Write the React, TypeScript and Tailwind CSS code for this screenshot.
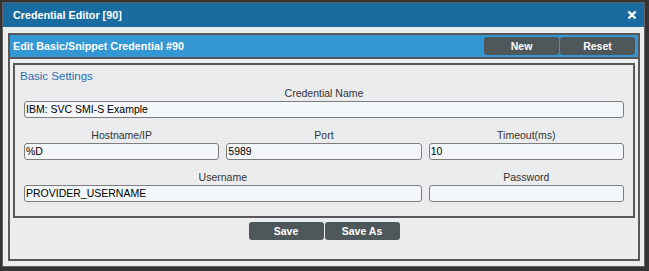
import React from 'react';

const font = { fontFamily: '"Liberation Sans", Arial, sans-serif' };

function Field({ label, value, className = '' }: { label: string; value: string; className?: string }) {
  return (
    <div className={`flex flex-col ${className}`}>
      <div className="text-center text-[10.5px] leading-[14px] text-[#333]">{label}</div>
      <div className="mt-[1px] h-[17px] rounded-[3px] border border-[#7d7d7d] bg-[#f4f7f9] px-[1px] text-[10.5px] leading-[15px] text-black">
        {value}
      </div>
    </div>
  );
}

function DarkButton({ children }: { children: React.ReactNode }) {
  return (
    <button className="h-[18px] w-[75px] rounded-[3px] bg-[#4e5759] text-[10.5px] font-bold leading-[18px] text-white">
      {children}
    </button>
  );
}

export default function App() {
  return (
    <div className="h-[271px] w-[649px] bg-[#343434] pt-[2px] pl-[2px] pr-[4px] pb-[4px]" style={font}>
      <div className="flex h-full flex-col border border-[#626262] bg-[#ebecee]">
        {/* window title */}
        <div className="flex h-[24px] shrink-0 items-center justify-between bg-[#1a6ca0] pl-[10px] pr-[7px]">
          <span className="text-[10.75px] font-bold text-white">Credential Editor [90]</span>
          <svg width="10" height="10" viewBox="0 0 10 10">
            <path d="M1.5 1.5 L8.5 8.5 M8.5 1.5 L1.5 8.5" stroke="white" strokeWidth="2.4" />
          </svg>
        </div>

        <div className="flex flex-1 flex-col pt-[6px] pl-[5px] pr-[4px] pb-[5px]">
          <div className="flex flex-1 flex-col border-2 border-[#585858]">
            {/* panel header */}
            <div className="flex h-[24px] shrink-0 items-center justify-between border-b-2 border-[#585858] bg-[#3297d3] pl-[3px] pr-[3px]">
              <span className="text-[10.75px] font-bold text-white">Edit Basic/Snippet Credential #90</span>
              <div className="flex gap-[1px]">
                <DarkButton>New</DarkButton>
                <DarkButton>Reset</DarkButton>
              </div>
            </div>

            <div className="flex flex-1 flex-col px-[3px] pt-[4px]">
              <div className="border-2 border-[#585858] px-[9px] pt-[3px] pb-[14px]">
                <div className="-ml-[4px] h-[17px] text-[11.5px] leading-[17px] text-[#2b70b3]">Basic Settings</div>
                <div className="mt-[1px] flex flex-col gap-[10px]">
                  <Field label="Credential Name" value="IBM: SVC SMI-S Example" />
                  <div className="grid grid-cols-3 gap-x-[7px]">
                    <Field label="Hostname/IP" value="%D" />
                    <Field label="Port" value="5989" />
                    <Field label="Timeout(ms)" value="10" />
                  </div>
                  <div className="grid grid-cols-3 gap-x-[7px]">
                    <Field label="Username" value="PROVIDER_USERNAME" className="col-span-2" />
                    <Field label="Password" value="" />
                  </div>
                </div>
              </div>
              <div className="mt-[4px] flex justify-center gap-[1px]">
                <DarkButton>Save</DarkButton>
                <DarkButton>Save As</DarkButton>
              </div>
            </div>
          </div>
        </div>
      </div>
    </div>
  );
}
